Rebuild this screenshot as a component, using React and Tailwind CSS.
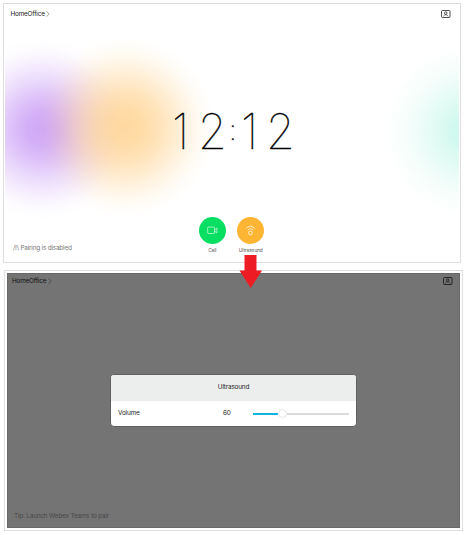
function PersonIcon({ className }) {
  return (
    <svg className={className} viewBox="0 0 10 8" fill="none" stroke="currentColor">
      <rect x="0.5" y="0.5" width="8.5" height="7" rx="1" strokeWidth="0.8" />
      <circle cx="4.75" cy="3.1" r="1.3" strokeWidth="0.7" />
      <path d="M2.4 6.4C3 5.2 3.8 4.7 4.75 4.7S6.5 5.2 7.1 6.4" strokeWidth="0.7" />
    </svg>
  );
}

function TopBar({ className, chevron }) {
  return (
    <header className={`flex items-center justify-between ${className}`}>
      <div className="flex h-2 items-center gap-[1.5px]">
        <span className="text-[6.4px] leading-2 tracking-[-0.2px]">HomeOffice</span>
        <svg className={`h-[6px] w-[4px] ${chevron}`} viewBox="0 0 4 6" fill="none" stroke="currentColor" strokeWidth="0.6">
          <path d="M0.5 0.3L3.2 3L0.5 5.7" />
        </svg>
      </div>
      <PersonIcon className="h-2 w-2.5" />
    </header>
  );
}

function Action({ color, label, children }) {
  return (
    <div className="flex w-[38.5px] flex-col items-center">
      <div className={`flex size-[27px] items-center justify-center rounded-full ${color}`}>{children}</div>
      <span className="mt-1 text-[4.8px] leading-[5px] tracking-[-0.1px] text-[#555]">{label}</span>
    </div>
  );
}

function HomeScreen() {
  return (
    <section className="relative ml-[3px] flex h-[260px] w-[458px] flex-col overflow-hidden border border-[#dedede] bg-white p-px">
      <div className="absolute inset-px overflow-hidden">
        <div className="absolute top-[34px] left-[-52px] size-[180px] rounded-full bg-[radial-gradient(circle_closest-side,#c797f5d8_0%,#c797f5c4_18%,#c99cf69c_36%,#cda3f768_54%,#cfa8f834_72%,#d4b0f910_87%,#d4b0f900_100%)]" />
        <div className="absolute top-[32px] left-[30px] size-[180px] rounded-full bg-[radial-gradient(circle_closest-side,#ffd08ad0_0%,#ffd08ac0_18%,#ffd08a9c_36%,#ffd08a68_54%,#ffd08a34_72%,#ffd08a10_87%,#ffd08a00_100%)]" />
        <div className="absolute top-[40px] left-[379px] size-[172px] rounded-full bg-[radial-gradient(circle_closest-side,#a8f2df98_0%,#a8f2df84_20%,#a8f2df5c_38%,#a8f2df38_56%,#a8f2df1a_74%,#a8f2df08_90%,#a8f2df00_100%)]" />
      </div>
      <TopBar className="relative mt-[5px] mr-[8px] ml-[5.5px] text-[#222]" chevron="text-[#666]" />
      <div className="relative mt-[84px] ml-[167.3px] flex h-[60px] w-[126px] text-[49px] leading-[60px] font-thin text-black [-webkit-text-stroke:0.4px_#000]">
        <span className="w-[25.6px] shrink-0 origin-left scale-x-95">1</span>
        <span className="w-[31.1px] shrink-0 origin-left scale-x-95">2</span>
        <span className="w-[12px] shrink-0 text-[28px] leading-[57px]">:</span>
        <span className="w-[25.3px] shrink-0 origin-left scale-x-95">1</span>
        <span className="w-[27px] shrink-0 origin-left scale-x-95">2</span>
      </div>
      <div className="relative mt-[55px] ml-[188px] flex">
        <Action color="bg-[#07df63]" label="Call">
          <svg className="h-[9px] w-[11px]" viewBox="0 0 11 9" fill="none" stroke="#fff" strokeWidth="0.6">
            <rect x="0.7" y="1.1" width="6.9" height="6.4" rx="0.5" />
            <path d="M7.6 3.8L9.9 2V6.8L7.6 5" />
          </svg>
        </Action>
        <Action color="bg-[#ffb534]" label="Ultrasound">
          <svg className="size-[11px]" viewBox="0 0 11 11" fill="none" stroke="#fff" strokeWidth="0.75">
            <path d="M1 3.7C3.6 .4 7.4.4 10 3.7M2.8 5.3C4.4 3.3 6.6 3.3 8.2 5.3" />
            <circle cx="5.5" cy="8" r="1.9" />
          </svg>
        </Action>
      </div>
      <p className="relative mt-[-9px] ml-[8px] text-[6.4px] leading-[8px] tracking-[-0.2px] text-[#777]">/!\ Pairing is disabled</p>
    </section>
  );
}

function VolumeSlider() {
  return (
    <div className="flex items-center">
      <div className="h-[2px] w-[25px] bg-[#14b5dc]" />
      <div className="size-[9px] rounded-full border border-[#e6e6e6] bg-white" />
      <div className="h-[2px] w-[62px] bg-[#dcdcdc]" />
    </div>
  );
}

function UltrasoundScreen() {
  return (
    <section className="mt-[7px] ml-[4px] h-[261px] w-[459px] border border-[#dedede] bg-white p-[2px]">
      <div className="flex h-full flex-col border border-[#686868] bg-[#747474]">
        <TopBar className="mt-[3px] mr-[6px] ml-[4px] text-[#111]" chevron="text-[#333]" />
        <div className="mt-[89px] ml-[102px] h-[53px] w-[247px] overflow-hidden rounded-[4px] border border-[#606060] bg-white text-[6.4px] tracking-[-0.18px] text-[#222]">
          <div className="flex h-[26px] items-center justify-center bg-[#eceeee]">Ultrasound</div>
          <div className="flex h-[25px] items-center">
            <span className="w-[105px] pl-[7px]">Volume</span>
            <span className="w-[37px] pl-[7px]">60</span>
            <VolumeSlider />
          </div>
        </div>
        <p className="mt-auto mb-[7px] ml-[6px] text-[6.4px] leading-[8px] tracking-[-0.18px] text-[#494949]">Tip: Launch Webex Teams to pair</p>
      </div>
    </section>
  );
}

export default function App() {
  return (
    <main className="relative h-[535px] w-[466px] overflow-hidden bg-white pt-[3px] font-['Inter','Liberation_Sans',sans-serif]">
      <HomeScreen />
      <UltrasoundScreen />
      <svg className="absolute top-[255px] left-[239px] h-[34px] w-[24px]" viewBox="0 0 24 34">
        <path d="M5.5 0H17.5V15.5H23L11.7 33L0.5 15.5H5.5Z" fill="#ed1c24" />
      </svg>
    </main>
  );
}
